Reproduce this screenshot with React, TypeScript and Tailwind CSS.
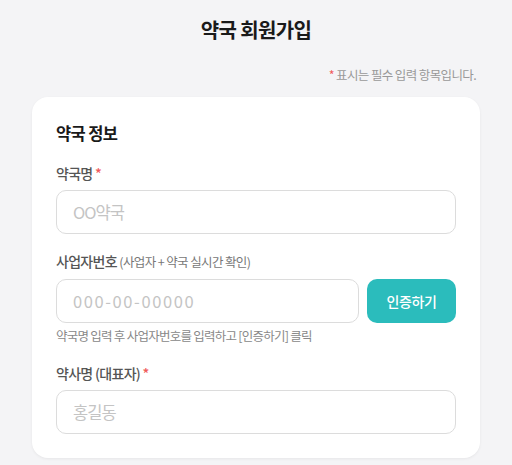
import React from "react";

const font = { fontFamily: '"Noto Sans CJK KR", "Noto Sans", sans-serif' };

function Label({ children }: { children: React.ReactNode }) {
  return (
    <div className="mb-[8px] text-[14px] leading-[18px] font-medium tracking-[-0.05em] text-[#555]">{children}</div>
  );
}

function Input({ placeholder, className = "" }: { placeholder: string; className?: string }) {
  return (
    <input
      placeholder={placeholder}
      className={`h-[44px] rounded-[10px] border border-[#dcdcdc] bg-white px-[16px] text-[16.5px] text-[#333] placeholder:text-[#c4c4c4] outline-none ${className}`}
      style={font}
    />
  );
}

export default function App() {
  return (
    <div className="min-h-[465px] bg-[#f4f4f6] pt-[16px] pb-[8px]" style={font}>
      <h1 className="text-center text-[20px] leading-[28px] font-bold tracking-[-0.03em] text-[#1a1a1a]">약국 회원가입</h1>
      <p className="mt-[22px] pr-[36px] text-right text-[12.5px] leading-[18px] tracking-[-0.05em] text-[#999]">
        <span className="text-[#f05a5a]">*</span> 표시는 필수 입력 항목입니다.
      </p>
      <div className="mx-[32px] mt-[13px] rounded-[16px] bg-white px-[24px] pt-[24px] pb-[24px] shadow-[0_1px_3px_rgba(0,0,0,0.06)]">
        <h2 className="text-[16.5px] leading-[24px] font-bold tracking-[-0.04em] text-[#1a1a1a]">약국 정보</h2>
        <div className="mt-[19px]">
          <Label>
            약국명 <span className="text-[#f05a5a]">*</span>
          </Label>
          <Input placeholder="OO약국" className="w-full tracking-[-0.06em]" />
        </div>
        <div className="mt-[18px]">
          <Label>
            사업자번호{" "}
            <span className="text-[12.5px] font-normal tracking-[-0.05em] text-[#777]">(사업자 + 약국 실시간 확인)</span>
          </Label>
          <div className="flex gap-[8px]">
            <Input placeholder="000-00-00000" className="min-w-0 flex-1 tracking-[1.6px]" />
            <button className="h-[44px] w-[89px] shrink-0 rounded-[10px] bg-[#2bbcbc] text-[14px] font-medium tracking-[-0.03em] text-white">
              인증하기
            </button>
          </div>
          <p className="mt-[4px] text-[12.5px] leading-[18px] tracking-[-0.06em] text-[#888]">
            약국명 입력 후 사업자번호를 입력하고 [인증하기] 클릭
          </p>
        </div>
        <div className="mt-[19px]">
          <Label>
            약사명 (대표자) <span className="text-[#f05a5a]">*</span>
          </Label>
          <Input placeholder="홍길동" className="w-full tracking-[-0.06em]" />
        </div>
      </div>
    </div>
  );
}
